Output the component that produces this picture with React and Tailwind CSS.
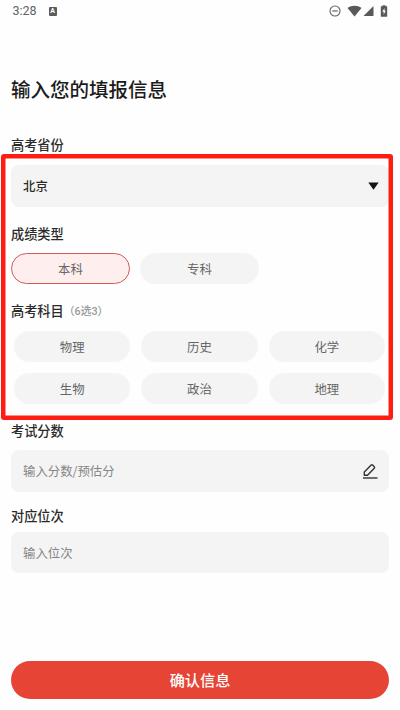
const subjects = ['物理', '历史', '化学', '生物', '政治', '地理'];

function StatusBar() {
  return (
    <header className="flex h-[22px] items-center pl-[12.5px] pr-[12px] text-[#626262]">
      <span className="font-[Roboto] text-[12.5px] leading-[22px]">3:28</span>
      <span className="ml-[12px] flex h-[9px] w-[8px] items-center justify-center rounded-[1px] bg-[#5c5c5c] font-[Roboto] text-[7px] font-bold leading-none text-white">A</span>
      <div className="ml-auto flex items-center">
        <svg width="12" height="12" viewBox="0 0 12 12" fill="none" stroke="currentColor">
          <circle cx="6" cy="6" r="5" strokeWidth="1.1" />
          <path d="M3.3 6h5.4" strokeWidth="1.2" />
        </svg>
        <svg className="ml-[6px]" width="15" height="12" viewBox="0 0 15 12" fill="#595959">
          <path d="M0.500 3C4.500 0 10.500 0 14.500 3L7.500 11.500Z" />
        </svg>
        <svg className="ml-[1px]" width="11" height="12" viewBox="0 0 11 12" fill="#595959">
          <path d="M10.500 1v10H0.500Z" />
        </svg>
        <svg className="ml-[6px]" width="8" height="12" viewBox="0 0 8 12">
          <path d="M2.500 0.300h3v1h1.700v10.400H0.800V1.300h1.700Z" fill="#595959" />
          <path d="M4.500 3L2.300 6.800h1.400V9.500L5.800 5.700H4.500Z" fill="#fff" />
        </svg>
      </div>
    </header>
  );
}

function Label({ className, children }) {
  return <h2 className={`flex h-5 items-center text-[13.2px] font-medium leading-5 text-[#2a2a2a] ${className}`}>{children}</h2>;
}

function Chip({ selected, className = '', children }) {
  return (
    <button className={`flex h-[31px] items-center justify-center rounded-full pt-[2px] text-[12.4px] text-[#666] ${selected ? 'border border-[#d1595b] bg-[#feeeee]' : 'bg-[#f4f4f4]'} ${className}`}>
      {children}
    </button>
  );
}

export default function App() {
  return (
    <div className="relative h-[710px] w-[400px] overflow-hidden bg-[#fefefe] font-['Noto_Sans_CJK_SC','Noto_Sans',sans-serif]">
      <StatusBar />
      <main className="flex flex-col px-[11px] pt-[52px]">
        <h1 className="h-[30px] text-[19.5px] font-medium leading-[29px] text-[#1b1b1b]">输入您的填报信息</h1>

        <Label className="mt-[31px]">高考省份</Label>
        <div className="mt-[10px] flex h-[42px] items-center justify-between rounded-lg bg-[#f4f4f4] pl-3 pr-[10px] text-[12.4px] font-medium text-[#2a2a2a]">
          北京
          <svg width="11" height="8" viewBox="0 0 11 8" fill="#151515">
            <path d="M0.300 0.500h10.400L5.500 7.700Z" />
          </svg>
        </div>

        <Label className="mt-[17px]">成绩类型</Label>
        <div className="mt-[9px] flex gap-[10px]">
          <Chip selected className="w-[119px]">本科</Chip>
          <Chip className="w-[119px]">专科</Chip>
        </div>

        <Label className="mt-[17px]">
          高考科目
          <span className="pt-px font-[Roboto,'Noto_Sans_CJK_SC',sans-serif] text-[10.8px] text-[#999]">（6选3）</span>
        </Label>
        <div className="ml-[3px] mr-[4px] mt-[10px] grid grid-cols-3 gap-[11px]">
          {subjects.map((s) => (
            <Chip key={s}>{s}</Chip>
          ))}
        </div>

        <Label className="mt-[17px]">考试分数</Label>
        <div className="mt-[9px] flex h-[42px] items-center justify-between rounded-lg bg-[#f4f4f4] pl-3 pr-[11px] text-[12.4px] text-[#858585]">
          输入分数/预估分
          <svg width="16" height="17" viewBox="0 0 16 17" fill="none" stroke="#333" strokeWidth="1.400" strokeLinejoin="round">
            <path d="M2.300 12.200V9L9.200 2.100Q9.900 1.400 10.600 2.100L12.300 3.800Q13 4.500 12.300 5.200L5.500 12.200Z" />
            <path d="M1 15h14.500" />
          </svg>
        </div>

        <Label className="mt-[14px]">对应位次</Label>
        <div className="mt-[6px] flex h-[41px] items-center rounded-lg bg-[#f4f4f4] px-3 pt-px text-[12.4px] text-[#858585]">输入位次</div>

        <button className="mt-[88px] flex h-[38px] items-center justify-center rounded-full bg-[#e64536] pb-[2px] text-[15.2px] font-medium text-white">确认信息</button>
      </main>
      <div className="pointer-events-none absolute left-[1px] top-[154px] h-[266px] w-[392px] rounded-[3px] border-4 border-[#ff1c12] shadow-[inset_0_0_0_0.5px_#ff1c12]" />
    </div>
  );
}
